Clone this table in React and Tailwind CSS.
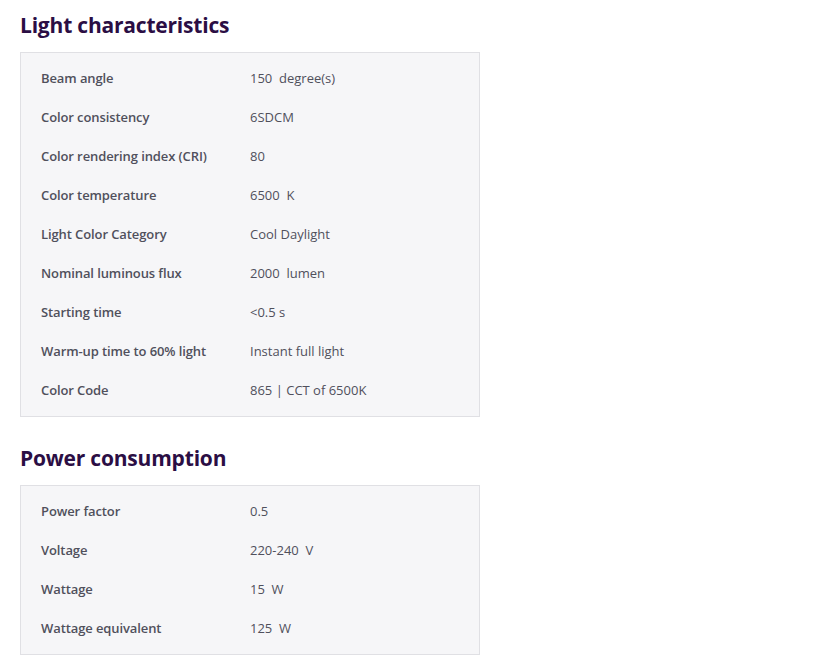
import React from "react";

const light = [
  ["Beam angle", "150  degree(s)"],
  ["Color consistency", "6SDCM"],
  ["Color rendering index (CRI)", "80"],
  ["Color temperature", "6500  K"],
  ["Light Color Category", "Cool Daylight"],
  ["Nominal luminous flux", "2000  lumen"],
  ["Starting time", "<0.5 s"],
  ["Warm-up time to 60% light", "Instant full light"],
  ["Color Code", "865 | CCT of 6500K"],
];

const power = [
  ["Power factor", "0.5"],
  ["Voltage", "220-240  V"],
  ["Wattage", "15  W"],
  ["Wattage equivalent", "125  W"],
];

const Section = ({ title, rows }) => (
  <section>
    <h2 className="h-7 leading-7 text-[21px] font-bold text-[#2b0e44] tracking-[-0.2px] translate-y-px">
      {title}
    </h2>
    <div className="mt-[14px] w-[460px] border border-[#e0e0e4] bg-[#f6f6f8] py-[6px]">
      {rows.map(([k, v]) => (
        <div key={k} className="flex h-[39px] items-center pl-5 text-[13px] text-[#50505c]">
          <span className="w-[209px] font-semibold tracking-[-0.1px]">{k}</span>
          <span className="whitespace-pre">{v}</span>
        </div>
      ))}
    </div>
  </section>
);

const App = () => {
  return (
    <div
      className="min-h-screen bg-white px-5 pt-[10px] flex flex-col gap-[26px]"
      style={{ fontFamily: '"Open Sans", "Noto Sans", sans-serif' }}
    >
      <Section title="Light characteristics" rows={light} />
      <Section title="Power consumption" rows={power} />
    </div>
  );
};

export default App;
